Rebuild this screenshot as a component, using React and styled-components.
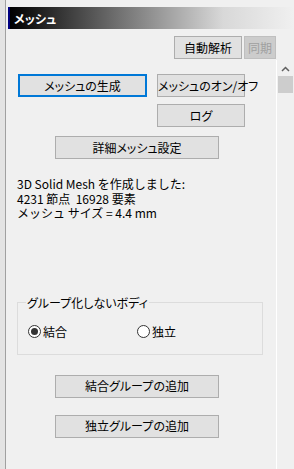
import React from "react";
import styled, { createGlobalStyle } from "styled-components";

const GlobalStyle = createGlobalStyle`
  html, body {
    margin: 0;
    padding: 0;
    background: #f0f0f0;
  }
  body {
    font-family: "Noto Sans CJK JP", "Liberation Sans", sans-serif;
    font-size: 12px;
    font-feature-settings: "palt";
    color: #000;
  }
`;

const Frame = styled.div`
  display: flex;
  width: 294px;
  height: 469px;
  overflow: hidden;
  background: #f0f0f0;
`;

const Edge = styled.div`
  width: 5px;
  flex: none;
  background: #e3e3e3;
  border-right: 1px solid #a0a0a0;
`;

const Main = styled.div`
  flex: 1;
  display: flex;
  flex-direction: column;
  padding: 7px 0 0 2px;
  min-width: 0;
`;

const TitleBar = styled.div`
  height: 22px;
  display: flex;
  align-items: center;
  padding-left: 4px;
  border-left: 2px solid #000080;
  background: linear-gradient(90deg, #000 0%, #707070 38%, #d8d8d8 75%, #f0f0f0 100%);
  color: #fff;
  font-weight: 700;
  font-size: 12px;
`;

const Toolbar = styled.div`
  display: flex;
  justify-content: flex-end;
  gap: 2px;
  padding: 7px 18px 0 0;
  height: 24px;
`;

const Button = styled.button`
  box-sizing: border-box;
  width: ${(p) => p.$w}px;
  height: 23px;
  padding: 0;
  background: ${(p) => (p.$disabled ? "#cccccc" : "#e1e1e1")};
  border: ${(p) => (p.$focus ? "2px solid #0078d7" : p.$disabled ? "1px solid #bfbfbf" : "1px solid #adadad")};
  color: ${(p) => (p.$disabled ? "#a0a0a0" : "#000")};
  font-family: "Noto Sans CJK JP", sans-serif;
  font-feature-settings: "palt";
  font-size: 12px;
  line-height: 1;
  white-space: nowrap;
  cursor: default;
`;

const Body = styled.div`
  flex: 1;
  display: flex;
  min-height: 0;
`;

const Panel = styled.div`
  flex: 1;
  border-right: 1px solid #ffffff;
  padding-top: 14px;
  display: flex;
  flex-direction: column;
`;

const ButtonGrid = styled.div`
  display: grid;
  grid-template-columns: 129px 88px;
  column-gap: 10px;
  row-gap: 7px;
  margin-left: 10px;
`;

const Indented = styled.div`
  margin: ${(p) => p.$top}px 0 0 47px;
`;

const Log = styled.div`
  margin: 18px 0 0 9px;
  line-height: 14.5px;
  white-space: pre;
  font-feature-settings: normal;
`;

const Group = styled.fieldset`
  margin: 73px 0 0 9px;
  width: 246px;
  box-sizing: border-box;
  border: 1px solid #dcdcdc;
  padding: 14px 0 16px 10px;
  legend {
    padding: 0 1px;
    margin-left: -2px;
    line-height: 17px;
  }
`;

const RadioRow = styled.div`
  display: grid;
  grid-template-columns: 109px auto;
  height: 13px;
  align-items: center;
`;

const Radio = styled.label`
  display: flex;
  align-items: center;
  gap: 2px;
  line-height: 13px;
`;

const Dot = styled.span`
  box-sizing: border-box;
  width: 13px;
  height: 13px;
  border-radius: 50%;
  border: 1px solid #333;
  background: #fff;
  display: flex;
  align-items: center;
  justify-content: center;
  &::after {
    content: "";
    width: 7px;
    height: 7px;
    border-radius: 50%;
    background: ${(p) => (p.$on ? "#333" : "transparent")};
  }
`;

const Scrollbar = styled.div`
  width: 17px;
  flex: none;
  display: flex;
  flex-direction: column;
  align-items: center;
  padding-top: 6px;
`;

const Thumb = styled.div`
  width: 15px;
  height: 17px;
  margin-top: 4px;
  background: #cdcdcd;
`;

export default function App() {
  return (
    <Frame>
      <GlobalStyle />
      <Edge />
      <Main>
        <TitleBar>メッシュ</TitleBar>
        <Toolbar>
          <Button $w={68}>自動解析</Button>
          <Button $w={32} $disabled>同期</Button>
        </Toolbar>
        <Body>
          <Panel>
            <ButtonGrid>
              <Button $w={129} $focus>メッシュの生成</Button>
              <Button $w={88}>メッシュのオン/オフ</Button>
              <span />
              <Button $w={88}>ログ</Button>
            </ButtonGrid>
            <Indented $top={9}>
              <Button $w={164}>詳細メッシュ設定</Button>
            </Indented>
            <Log>
              {"3D Solid Mesh を作成しました:\n4231 節点  16928 要素\nメッシュ サイズ = 4.4 mm"}
            </Log>
            <Group>
              <legend>グループ化しないボディ</legend>
              <RadioRow>
                <Radio>
                  <Dot $on />
                  結合
                </Radio>
                <Radio>
                  <Dot />
                  独立
                </Radio>
              </RadioRow>
            </Group>
            <Indented $top={20}>
              <Button $w={164}>結合グループの追加</Button>
            </Indented>
            <Indented $top={17}>
              <Button $w={164}>独立グループの追加</Button>
            </Indented>
          </Panel>
          <Scrollbar>
            <svg width="9" height="6" viewBox="0 0 9 6">
              <path d="M1 5 L4.5 1.5 L8 5" fill="none" stroke="#606060" strokeWidth="1.5" />
            </svg>
            <Thumb />
          </Scrollbar>
        </Body>
      </Main>
    </Frame>
  );
}
